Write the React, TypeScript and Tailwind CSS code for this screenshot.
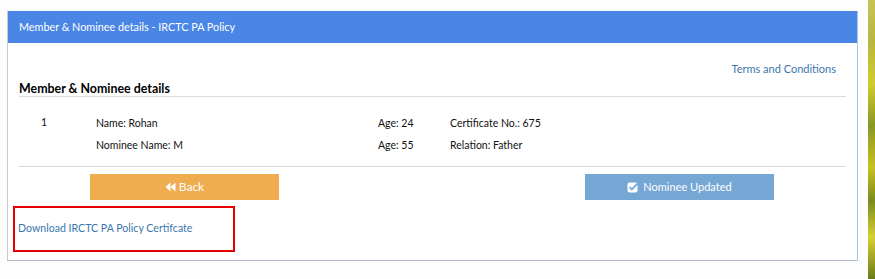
import React from "react";

function BackIcon() {
  return (
    <svg width="11" height="10" viewBox="0 0 11 10" className="mr-[3px]">
      <path d="M5.5 0.5 L0.5 5 L5.5 9.5 Z" fill="white" />
      <path d="M10.5 0.5 L5.5 5 L10.5 9.5 Z" fill="white" />
    </svg>
  );
}

function CheckSquareIcon() {
  return (
    <svg width="12" height="11" viewBox="0 0 12 11" className="mr-[4px]">
      <rect x="0.5" y="0.5" width="10" height="10" rx="2" fill="white" />
      <path d="M2.6 5.2 L4.8 7.4 L10.8 1.4" stroke="#76a6d4" strokeWidth="1.8" fill="none" />
    </svg>
  );
}

export default function App() {
  return (
    <div className="flex w-[875px] h-[279px] overflow-hidden bg-white" style={{ fontFamily: 'Lato, "Open Sans", sans-serif' }}>
      <div className="w-[868px] h-full bg-[#fdfdfd] pl-[7px] pt-[11px]">
        <div className="w-[851px] h-[250px] border-l border-l-[#c9c9c9] border-r border-r-[#a9c3ea] border-b border-b-[#b4bccb] bg-white flex flex-col">
          <div className="h-[32px] bg-[#4a86e6] px-[11px] flex items-center text-white text-[10.8px]">
            Member &amp; Nominee details - IRCTC PA Policy
          </div>
          <div className="px-[11px]">
            <div className="mt-[18px] h-[16px] flex justify-end pr-[10px] text-[11px] leading-[16px] text-[#3a77ae]">
              Terms and Conditions
            </div>
            <div className="mt-[5px] border-b border-[#dcdcdc] text-[12.4px] leading-[14px] font-bold text-black">
              Member &amp; Nominee details
            </div>
            <div className="pt-[19px] pb-[14px] border-b border-[#d9d9d9] text-[10.5px] leading-[14px] text-[#111] flex flex-col gap-[8px]">
              <div className="flex pl-[22px]">
                <div className="w-[55px] -mt-[1px]">1</div>
                <div className="w-[282px]">Name: Rohan</div>
                <div className="w-[72px]">Age: 24</div>
                <div>Certificate No.: 675</div>
              </div>
              <div className="flex pl-[22px]">
                <div className="w-[55px]"></div>
                <div className="w-[282px]">
                  <span className="inline-block w-[87px] overflow-hidden whitespace-nowrap align-top">Nominee Name: Manoj</span>
                </div>
                <div className="w-[72px]">Age: 55</div>
                <div>Relation: Father</div>
              </div>
            </div>
            <div className="mt-[7px] flex">
              <div className="ml-[71px] w-[189px] h-[26px] bg-[#efad4f] flex items-center justify-center text-white text-[12px]">
                <BackIcon />
                Back
              </div>
              <div className="ml-[306px] w-[189px] h-[26px] bg-[#76a6d4] flex items-center justify-center text-white text-[11px]">
                <CheckSquareIcon />
                Nominee Updated
              </div>
            </div>
          </div>
          <div className="pl-[5px] mt-[6px]">
            <div className="w-[222px] h-[46px] border-2 border-[#e60000] flex items-center pl-[3px] text-[10.6px] text-[#3a77ae]">
              Download IRCTC PA Policy Certifcate
            </div>
          </div>
        </div>
      </div>
      <div
        className="flex-1 h-full"
        style={{
          background:
            "linear-gradient(180deg, #c8c35a 0%, #b8b640 15%, #d0cc2a 30%, #8a9628 45%, #c9c21e 60%, #7a8a20 72%, #d8d030 85%, #6a7a1c 100%)",
        }}
      />
    </div>
  );
}
